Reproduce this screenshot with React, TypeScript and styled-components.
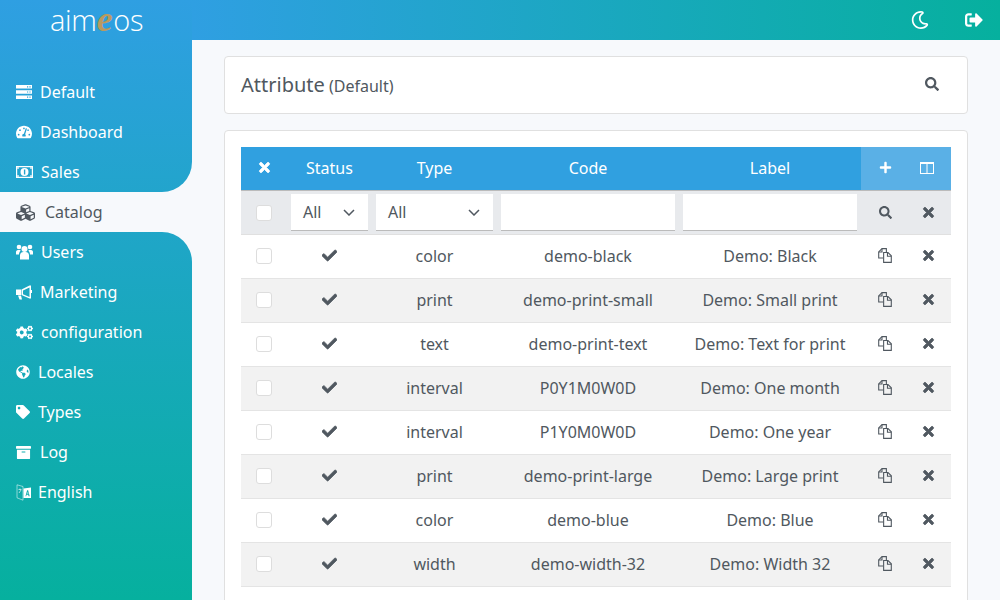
import React from "react";
import styled, { createGlobalStyle } from "styled-components";
import {
  FaTachometerAlt,
  FaCubes,
  FaCogs,
  FaGlobeAmericas,
  FaTag,
  FaArchive,
  FaCheck,
  FaTimes,
  FaSearch,
  FaPlus,
  FaRegMoon,
  FaSignOutAlt,
} from "react-icons/fa";

const ServerIcon = () => (
  <svg width="16" height="14" viewBox="0 0 16 14" fill="currentColor" fillRule="evenodd">
    <path d="M0 0h16v3.6H0zM11 1.2h1.2v1.2H11zM13.4 1.2h1.2v1.2h-1.2z" />
    <path d="M0 5.2h16v3.6H0zM11 6.4h1.2v1.2H11zM13.4 6.4h1.2v1.2h-1.2z" />
    <path d="M0 10.4h16V14H0zM11 11.6h1.2v1.2H11zM13.4 11.6h1.2v1.2h-1.2z" />
  </svg>
);

const MoneyIcon = () => (
  <svg width="17" height="12" viewBox="0 0 17 12" fill="currentColor" fillRule="evenodd">
    <path d="M0 0h17v12H0zM1.2 1.2v9.6h14.6V1.2z" />
    <path d="M4.5 6a4 4 0 1 0 8 0a4 4 0 1 0-8 0zM7.9 3.4h1.4v5.2H7.9z" />
    <path d="M1.2 1.2h1.6v1.6H1.2zM14.2 1.2h1.6v1.6h-1.6zM1.2 9.2h1.6v1.6H1.2zM14.2 9.2h1.6v1.6h-1.6z" />
  </svg>
);

const UsersIcon = () => (
  <svg width="17" height="16" viewBox="0 0 17 16" fill="currentColor">
    <circle cx="8.5" cy="5" r="3" />
    <circle cx="3" cy="3" r="2.3" />
    <circle cx="14" cy="3" r="2.3" />
    <path d="M4 15.5V11a3.5 3.5 0 0 1 3.5-3h2a3.5 3.5 0 0 1 3.5 3v4.5z" />
    <path d="M0 10.5V8c0-1.5 1.2-2 3-2 .6 0 1.2.1 1.7.4C3.5 7.5 3 9 3 10.5z" />
    <path d="M17 10.5V8c0-1.5-1.2-2-3-2-.6 0-1.2.1-1.7.4 1.2 1.1 1.7 2.6 1.7 4.1z" />
  </svg>
);

const BullhornIcon = () => (
  <svg width="16" height="15" viewBox="0 0 16 15" fill="currentColor" fillRule="evenodd">
    <path d="M0 4.5h5v5.5H0z" />
    <path d="M2 10.5h3l1 4H3.5z" />
    <path d="M5.5 4.5L13.5.5H15v13h-1.5l-8-3.5zM7 5.4v3.9l6.5 2.7V2.5z" />
    <path d="M15 5h1v3h-1z" />
  </svg>
);

const LanguageIcon = () => (
  <svg width="16" height="17" viewBox="0 0 16 17" fill="none">
    <path d="M7 2.5L1 .8v13l6 2.4z" stroke="currentColor" strokeWidth=".7" opacity=".75" />
    <path d="M2.5 5.5h3M4 4.5v1M3 9l2-3" stroke="currentColor" strokeWidth=".7" opacity=".9" />
    <path
      fill="currentColor"
      fillRule="evenodd"
      d="M7.5 4.5L15 3.5v10.5H7.5zM9.5 12.2l1.6-6h1l1.6 6h-1.1l-.4-1.5h-1.6l-.4 1.5zM11.3 9.8h1.1l-.55-2z"
    />
  </svg>
);

const CopyIcon = () => (
  <svg width="14" height="15" viewBox="0.4 0.4 12.7 13.7" fill="none" stroke="currentColor" strokeWidth="1">
    <path d="M5 9.5H1V4l3-3h4v3" />
    <path d="M4 1v3H1" />
    <path d="M5.5 4.5h4l3 3v6h-7z" />
    <path d="M9 4.5V8h3.5" />
  </svg>
);

const ColumnsIcon = () => (
  <svg width="14" height="12" viewBox="0 0 14 12" fill="none" stroke="currentColor">
    <rect x="0.5" y="0.5" width="13" height="11" />
    <path d="M7 0.5v11" />
    <path d="M0.5 1.5h13" />
  </svg>
);

const ChevronIcon = () => (
  <svg width="12" height="7" viewBox="0 0 12 7" fill="none" stroke="currentColor" strokeWidth="1.5">
    <path d="M1 1l5 5 5-5" />
  </svg>
);

const topItems = [
  { icon: <ServerIcon />, label: "Default", offset: 24 },
  { icon: <FaTachometerAlt size={16} />, label: "Dashboard", offset: 24 },
  { icon: <MoneyIcon />, label: "Sales", offset: 25 },
];

const bottomItems = [
  { icon: <UsersIcon />, label: "Users", offset: 25 },
  { icon: <BullhornIcon />, label: "Marketing", offset: 24 },
  { icon: <FaCogs size={17} />, label: "configuration", offset: 25 },
  { icon: <FaGlobeAmericas size={14} />, label: "Locales", offset: 22 },
  { icon: <FaTag size={14} />, label: "Types", offset: 22 },
  { icon: <FaArchive size={15} />, label: "Log", offset: 24 },
  { icon: <LanguageIcon />, label: "English", offset: 22 },
];

const rows = [
  { type: "color", code: "demo-black", label: "Demo: Black" },
  { type: "print", code: "demo-print-small", label: "Demo: Small print" },
  { type: "text", code: "demo-print-text", label: "Demo: Text for print" },
  { type: "interval", code: "P0Y1M0W0D", label: "Demo: One month" },
  { type: "interval", code: "P1Y0M0W0D", label: "Demo: One year" },
  { type: "print", code: "demo-print-large", label: "Demo: Large print" },
  { type: "color", code: "demo-blue", label: "Demo: Blue" },
  { type: "width", code: "demo-width-32", label: "Demo: Width 32" },
];

const App = () => {
  return (
    <>
      <GlobalStyle />
      <Page>
        <Sidebar>
          <TopGroup>
            <Logo>
              aim<LogoE>e</LogoE>os
            </Logo>
            <TopNav>
              {topItems.map((item) => (
                <NavItem key={item.label}>
                  <NavIcon $width={item.offset}>{item.icon}</NavIcon>
                  {item.label}
                </NavItem>
              ))}
            </TopNav>
          </TopGroup>
          <ActiveItem>
            <FaCubes />
            Catalog
          </ActiveItem>
          <BottomGroup>
            {bottomItems.map((item) => (
              <NavItem key={item.label}>
                <NavIcon $width={item.offset}>{item.icon}</NavIcon>
                {item.label}
              </NavItem>
            ))}
          </BottomGroup>
        </Sidebar>
        <Main>
          <TopBar>
            <BarIcon>
              <FaRegMoon />
            </BarIcon>
            <BarIcon>
              <FaSignOutAlt />
            </BarIcon>
          </TopBar>
          <Content>
            <TitleCard>
              <Title>
                Attribute<TitleSite> (Default)</TitleSite>
              </Title>
              <TitleSearch>
                <FaSearch />
              </TitleSearch>
            </TitleCard>
            <ListCard>
              <Table>
                <colgroup>
                  <col width="46" />
                  <col width="85" />
                  <col width="125" />
                  <col width="182" />
                  <col width="182" />
                  <col width="45" />
                  <col width="45" />
                </colgroup>
                <thead>
                  <tr>
                    <HeadCell>
                      <BoldTimes />
                    </HeadCell>
                    <HeadCell>Status</HeadCell>
                    <HeadCell>Type</HeadCell>
                    <HeadCell>Code</HeadCell>
                    <HeadCell>Label</HeadCell>
                    <ActionHeadCell>
                      <FaPlus />
                    </ActionHeadCell>
                    <ActionHeadCell $last>
                      <ColumnsIcon />
                    </ActionHeadCell>
                  </tr>
                </thead>
                <tbody>
                  <tr>
                    <FilterCell>
                      <Check type="checkbox" />
                    </FilterCell>
                    <FilterCell>
                      <SelectBox>
                        All
                        <ChevronIcon />
                      </SelectBox>
                    </FilterCell>
                    <FilterCell>
                      <SelectBox>
                        All
                        <ChevronIcon />
                      </SelectBox>
                    </FilterCell>
                    <FilterCell>
                      <FilterInput />
                    </FilterCell>
                    <FilterCell>
                      <FilterInput />
                    </FilterCell>
                    <FilterActionCell>
                      <FaSearch />
                    </FilterActionCell>
                    <FilterCell>
                      <BoldTimes />
                    </FilterCell>
                  </tr>
                  {rows.map((row) => (
                    <Row key={row.code}>
                      <Cell>
                        <Check type="checkbox" />
                      </Cell>
                      <Cell>
                        <BoldCheck />
                      </Cell>
                      <Cell>{row.type}</Cell>
                      <Cell>{row.code}</Cell>
                      <Cell>{row.label}</Cell>
                      <CopyCell>
                        <CopyIcon />
                      </CopyCell>
                      <Cell>
                        <BoldTimes />
                      </Cell>
                    </Row>
                  ))}
                </tbody>
              </Table>
            </ListCard>
          </Content>
        </Main>
      </Page>
    </>
  );
};

export default App;

const GlobalStyle = createGlobalStyle`
  html, body {
    margin: 0;
    height: 100%;
    overflow: hidden;
  }
  body {
    font-family: "Noto Sans", "Open Sans", sans-serif;
    font-size: 16px;
    color: #505860;
    background: #f7f9fc;
  }
`;

const Page = styled.div`
  display: flex;
  height: 600px;
  overflow: hidden;
`;

const Sidebar = styled.nav`
  display: flex;
  flex-direction: column;
  flex: 0 0 192px;
  width: 192px;
  height: 600px;
`;

const sidebarGradient = "linear-gradient(180deg, #2f9fe2 0%, #06b09e 100%) fixed";

const TopGroup = styled.div`
  height: 192px;
  box-sizing: border-box;
  background: ${sidebarGradient};
  border-bottom-right-radius: 30px;
`;

const Logo = styled.div`
  display: flex;
  align-items: baseline;
  height: 40px;
  padding-left: 50px;
  font-family: "Open Sans", sans-serif;
  font-weight: 300;
  font-size: 29px;
  letter-spacing: -0.3px;
  line-height: 38px;
  color: #fff;
`;

const LogoE = styled.span`
  margin-right: 1px;
  font-family: "Liberation Serif", serif;
  font-style: italic;
  font-weight: 700;
  font-size: 36px;
  line-height: 38px;
  color: #b99a5f;
`;

const TopNav = styled.div`
  padding-top: 32px;
`;

const BottomGroup = styled.div`
  flex: 1;
  background: ${sidebarGradient};
  border-top-right-radius: 30px;
`;

const NavItem = styled.div`
  display: flex;
  align-items: center;
  height: 40px;
  padding-left: 16px;
  color: #fff;
  line-height: 40px;
`;

const NavIcon = styled.span<{ $width: number }>`
  display: flex;
  flex: 0 0 ${({ $width }) => $width}px;
`;

const ActiveItem = styled.div`
  display: flex;
  align-items: center;
  gap: 10px;
  height: 40px;
  padding-left: 16px;
  color: #505860;
  background: #f7f9fc;

  svg {
    font-size: 19px;
  }
`;

const Main = styled.main`
  flex: 1;
  min-width: 0;
`;

const TopBar = styled.header`
  display: flex;
  justify-content: flex-end;
  align-items: center;
  gap: 36px;
  height: 40px;
  padding-right: 17px;
  background: linear-gradient(90deg, #2f9fe2 0%, #06b09e 100%);
`;

const BarIcon = styled.span`
  display: flex;
  color: #fff;
  font-size: 18px;
`;

const Content = styled.div`
  display: flex;
  flex-direction: column;
  gap: 16px;
  padding: 16px 32px 0;
`;

const TitleCard = styled.section`
  display: flex;
  align-items: center;
  justify-content: space-between;
  height: 58px;
  box-sizing: border-box;
  padding: 0 28px 2px 16px;
  background: #fff;
  border: 1px solid #e0e0e0;
  border-radius: 4px;
`;

const Title = styled.h1`
  margin: 0;
  font-size: 20px;
  font-weight: 400;
`;

const TitleSite = styled.small`
  font-size: 16px;
`;

const TitleSearch = styled.span`
  display: flex;
  font-size: 14px;
`;

const ListCard = styled.section`
  padding: 16px;
  height: 600px;
  background: #fff;
  border: 1px solid #e0e0e0;
  border-radius: 4px;
`;

const Table = styled.table`
  width: 710px;
  table-layout: fixed;
  border-collapse: separate;
  border-spacing: 0;
  text-align: center;
`;

const BoldTimes = styled(FaTimes)`
  stroke: currentColor;
  stroke-width: 25;
`;

const BoldCheck = styled(FaCheck)`
  stroke: currentColor;
  stroke-width: 25;
`;

const HeadCell = styled.th`
  height: 44px;
  box-sizing: border-box;
  padding: 0 0 2px;
  font-weight: 400;
  color: #fff;
  background: #30a0e0;
  border-bottom: 1px solid #bbb;

  svg {
    display: block;
    margin: 0 auto;
    font-size: 15px;
  }
`;

const ActionHeadCell = styled(HeadCell)<{ $last?: boolean }>`
  padding: ${({ $last }) => ($last ? "0 3px 2px 0" : "0 0 2px 3px")};
  background: #5ab0e6;

  svg {
    font-size: 13px;
  }
`;

const FilterCell = styled.td`
  height: 44px;
  box-sizing: border-box;
  padding: 0 4px;
  background: #e8eaed;
  border-bottom: 1px solid #e0e0e0;

  svg {
    display: block;
    margin: 0 auto;
    font-size: 15px;
  }
`;

const FilterActionCell = styled(FilterCell)`
  padding-left: 7px;

  svg {
    font-size: 13px;
  }
`;

const SelectBox = styled.div`
  display: flex;
  align-items: center;
  justify-content: space-between;
  height: 37px;
  box-sizing: border-box;
  padding: 0 13px 0 12px;
  background: #fff;
  border-bottom: 1px solid #bbb;

  svg {
    margin: 0;
    width: 12px;
    height: 7px;
  }
`;

const FilterInput = styled.input`
  display: block;
  width: 100%;
  height: 37px;
  box-sizing: border-box;
  padding: 0 12px;
  background: #fff;
  border: 0;
  border-bottom: 1px solid #bbb;
  border-radius: 0;
  outline: none;
`;

const Check = styled.input`
  appearance: none;
  display: block;
  width: 16px;
  height: 16px;
  margin: 0 auto;
  background: #fff;
  border: 1px solid #ddd;
  border-radius: 3px;
`;

const Row = styled.tr`
  &:nth-child(odd) td {
    background: #f2f2f2;
  }
`;

const Cell = styled.td`
  height: 44px;
  box-sizing: border-box;
  padding: 0 0 2px;
  background: #fff;
  border-bottom: 1px solid #e4e4e4;

  svg {
    display: block;
    margin: 0 auto;
    font-size: 15px;
  }
`;

const CopyCell = styled(Cell)`
  padding-left: 3px;
`;
